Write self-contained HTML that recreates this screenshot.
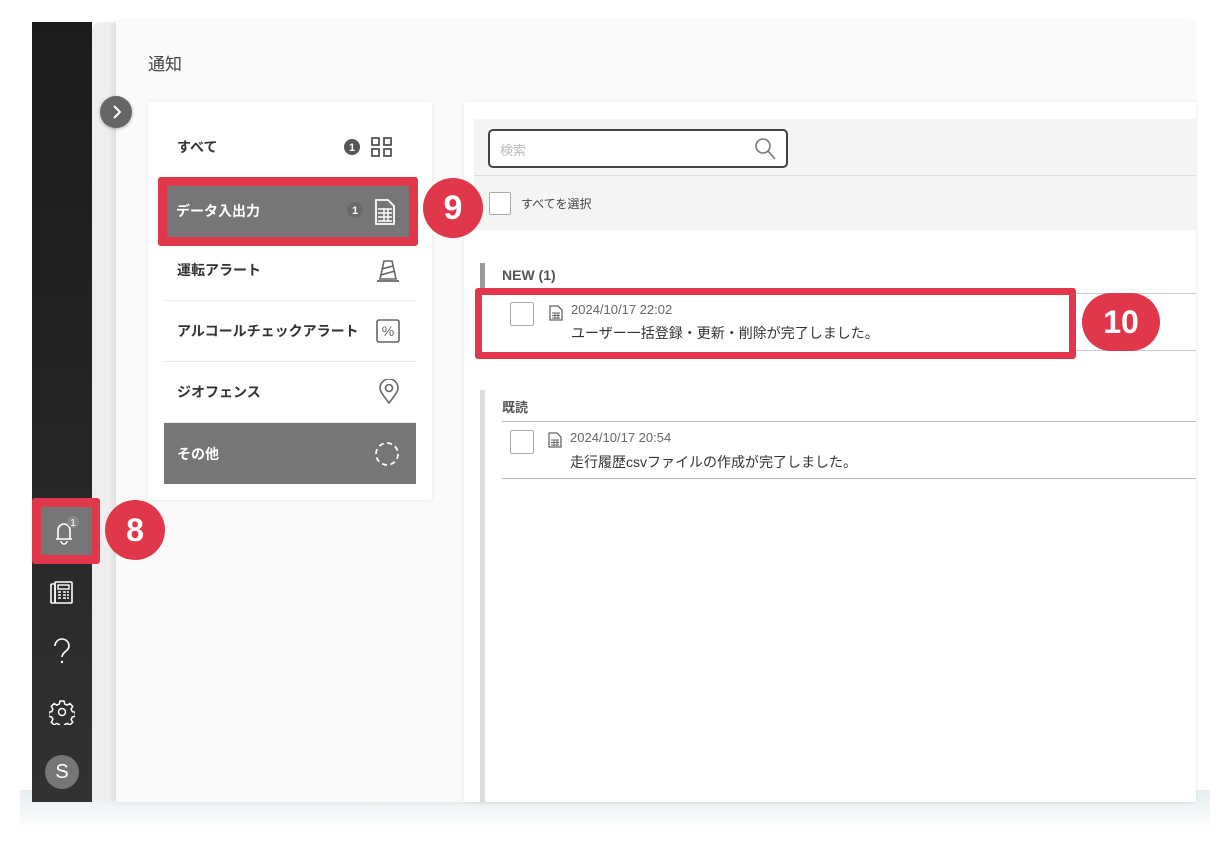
<!DOCTYPE html>
<html><head><meta charset="utf-8"><style>
*{margin:0;padding:0;box-sizing:border-box}
body{width:1228px;height:844px;background:#fff;position:relative;overflow:hidden;font-family:"Liberation Sans","Noto Sans CJK JP",sans-serif;color:#333}
.a{position:absolute}
.item{position:absolute;left:164px;width:252px;height:61px;border-bottom:1px solid #ececec;background:#fff}
.item span{position:absolute;left:13px;top:50%;transform:translateY(-50%);font-size:14px;font-weight:bold;color:#333}
.item svg{position:absolute;right:16px;top:50%;transform:translateY(-50%)}
.circ{position:absolute;border-radius:50%;background:#e0374b;color:#fff;font-weight:bold;text-align:center;font-family:"Liberation Sans",sans-serif}
.cb{position:absolute;border:1.5px solid #aaa;border-radius:2px;background:#fff}
</style></head><body>
<div class="a" style="left:20px;top:790px;width:1190px;height:40px;background:linear-gradient(#e6eef0,#fff)"></div>
<!-- sidebar -->
<div class="a" style="left:32px;top:22px;width:60px;height:780px;background:linear-gradient(#1b1b1b 0%,#222 40%,#323232 100%)"></div>
<!-- main -->
<div class="a" style="left:92px;top:22px;width:1104px;height:780px;background:#eeeeee;border-radius:8px 0 0 8px"></div>
<div class="a" style="left:116px;top:22px;width:1080px;height:780px;background:#fafafa;box-shadow:-3px 0 6px rgba(0,0,0,0.08)"></div>
<div class="a" style="left:148px;top:50px;font-size:17px;color:#444">通知</div>
<div class="a" style="left:100px;top:96px;width:32px;height:32px;border-radius:50%;background:#666;box-shadow:0 1px 3px rgba(0,0,0,.3)"><svg width="32" height="32"><path d="M14 10l6 6-6 6" stroke="#fff" stroke-width="2" fill="none"/></svg></div>
<!-- left card -->
<div class="a" style="left:148px;top:102px;width:284px;height:398px;background:#fff;box-shadow:0 0 4px rgba(0,0,0,.08)"></div>
<div class="item" style="top:117px"><span>すべて</span>
<svg width="60" height="24" viewBox="0 0 60 24"><circle cx="12" cy="12" r="8" fill="#555"/><text x="12" y="16" font-size="11" fill="#fff" text-anchor="middle" font-weight="bold" font-family="Liberation Sans">1</text><g fill="none" stroke="#555" stroke-width="1.8"><rect x="32" y="3" width="7" height="7"/><rect x="44" y="3" width="7" height="7"/><rect x="32" y="14" width="7" height="7"/><rect x="44" y="14" width="7" height="7"/></g></svg></div>
<div class="item" style="top:239px;height:62px"><span>運転アラート</span><svg width="24" height="26"><path d="M8 4h8l4 18H4z M6 12l11-3 M5 18l14-4" fill="none" stroke="#666" stroke-width="1.6"/><path d="M1 24h22" stroke="#666" stroke-width="1.8"/></svg></div>
<div class="item" style="top:301px"><span>アルコールチェックアラート</span><svg width="24" height="24"><rect x="1" y="1" width="22" height="22" rx="2" fill="none" stroke="#666" stroke-width="1.6"/><text x="12" y="17" font-size="14" text-anchor="middle" fill="#666" font-family="Liberation Sans">%</text></svg></div>
<div class="item" style="top:362px"><span>ジオフェンス</span><svg width="22" height="26"><path d="M11 24C4 15 2 12 2 9a9 9 0 0118 0c0 3-2 6-9 15z" fill="none" stroke="#666" stroke-width="1.6"/><circle cx="11" cy="9" r="3.5" fill="none" stroke="#666" stroke-width="1.6"/></svg></div>
<div class="item" style="top:423px;background:#767676;border:none"><span style="color:#fff">その他</span><svg width="26" height="26"><circle cx="13" cy="13" r="11" fill="none" stroke="#fff" stroke-width="1.8" stroke-dasharray="5 3.6"/></svg></div>
<!-- right panel -->
<div class="a" style="left:464px;top:102px;width:732px;height:700px;background:#fff;box-shadow:0 0 4px rgba(0,0,0,.08)"></div>
<div class="a" style="left:474px;top:119px;width:722px;height:111px;background:#f4f4f4"></div>
<div class="a" style="left:474px;top:175px;width:722px;height:1px;background:#ddd"></div>
<div class="a" style="left:488px;top:129px;width:300px;height:39px;border:2px solid #444;border-radius:5px;background:#fff"><span style="position:absolute;left:10px;top:9px;font-size:13px;color:#bbb">検索</span><svg class="a" style="right:8px;top:6px" width="24" height="24"><circle cx="9" cy="9" r="7" fill="none" stroke="#777" stroke-width="1.6"/><path d="M14 14l7 8" stroke="#777" stroke-width="1.6"/></svg></div>
<div class="cb" style="left:489px;top:192px;width:22px;height:23px"></div>
<div class="a" style="left:521px;top:195px;font-size:12px;color:#444">すべてを選択</div>
<!-- highlighted item + 9 -->
<div class="a" style="left:158px;top:177px;width:260px;height:69px;background:#e0374b;border-radius:3px"></div>
<div class="a" style="left:167px;top:186px;width:242px;height:51px;background:#767676"><span style="position:absolute;left:9px;top:15px;font-size:14px;font-weight:bold;color:#fff">データ入出力</span>
<svg class="a" style="right:8px;top:11px" width="60" height="30" viewBox="0 0 60 30"><circle cx="14" cy="13" r="8" fill="#6a6a6a"/><text x="14" y="17" font-size="11" fill="#fff" text-anchor="middle" font-weight="bold" font-family="Liberation Sans">1</text><path d="M35 3h12l6 6v18H35z" fill="none" stroke="#fff" stroke-width="1.8"/><path d="M37 12h14M37 16h14M37 20h14M37 24h14M43 12v12M47 12v12" stroke="#fff" stroke-width="1.5"/></svg></div>
<div class="circ" style="left:423px;top:178px;width:60px;height:60px;font-size:34px;line-height:60px">9</div>
<div class="a" style="left:480px;top:263px;width:5px;height:90px;background:#999"></div>
<div class="a" style="left:502px;top:267px;font-size:14px;font-weight:bold;color:#555">NEW (1)</div>
<div class="a" style="left:502px;top:293px;width:694px;height:1px;background:#ccc"></div>
<div class="a" style="left:502px;top:350px;width:694px;height:1px;background:#ccc"></div>
<div class="a" style="left:475px;top:288px;width:601px;height:71px;border:7px solid #e0374b;border-radius:3px;background:#fff"></div>
<div class="cb" style="left:510px;top:302px;width:24px;height:24px"></div>
<svg class="a" style="left:549px;top:305px" width="14" height="16"><path d="M1 1h8l4 4v10H1z" fill="none" stroke="#666" stroke-width="1.3"/><path d="M3 8h8M3 10.5h8M3 13h8M6 8v6M9 8v6" stroke="#666" stroke-width="1"/></svg>
<div class="a" style="left:571px;top:302px;font-size:13px;color:#666">2024/10/17 22:02</div>
<div class="a" style="left:571px;top:323px;font-size:14px;color:#333">ユーザー一括登録・更新・削除が完了しました。</div>
<div class="circ" style="left:1082px;top:293px;width:78px;height:58px;border-radius:29px;font-size:32px;line-height:58px">10</div>
<div class="a" style="left:480px;top:390px;width:5px;height:412px;background:#ddd"></div>
<div class="a" style="left:502px;top:397px;font-size:13px;font-weight:bold;color:#555">既読</div>
<div class="a" style="left:502px;top:421px;width:694px;height:1px;background:#bbb"></div>
<div class="a" style="left:502px;top:478px;width:694px;height:1px;background:#bbb"></div>
<div class="cb" style="left:510px;top:430px;width:24px;height:24px"></div>
<svg class="a" style="left:548px;top:432px" width="14" height="16"><path d="M1 1h8l4 4v10H1z" fill="none" stroke="#666" stroke-width="1.3"/><path d="M3 8h8M3 10.5h8M3 13h8M6 8v6M9 8v6" stroke="#666" stroke-width="1"/></svg>
<div class="a" style="left:570px;top:430px;font-size:13px;color:#666">2024/10/17 20:54</div>
<div class="a" style="left:570px;top:452px;font-size:14px;color:#333">走行履歴csvファイルの作成が完了しました。</div>
<!-- sidebar icons -->
<div class="a" style="left:32px;top:498px;width:68px;height:66px;background:#e0374b;border-radius:3px"></div>
<div class="a" style="left:41px;top:507px;width:51px;height:48px;background:#767676"><svg width="51" height="48"><path d="M15 32h16M17 32v-9a6 6 0 0112 0v9" fill="none" stroke="#fff" stroke-width="1.6"/><path d="M20 34a3 3 0 006 0" fill="none" stroke="#fff" stroke-width="1.5"/><circle cx="32" cy="15" r="6" fill="#888"/><text x="32" y="19" font-size="10" fill="#fff" text-anchor="middle" font-family="Liberation Sans">1</text></svg></div>
<div class="circ" style="left:105px;top:500px;width:60px;height:60px;font-size:32px;line-height:60px">8</div>
<svg class="a" style="left:49px;top:580px" width="26" height="26"><rect x="2" y="4" width="4" height="19" rx="1" fill="none" stroke="#fff" stroke-width="1.6"/><rect x="6" y="2" width="17" height="21" rx="1" fill="none" stroke="#fff" stroke-width="1.6"/><rect x="9" y="5" width="11" height="4" fill="none" stroke="#fff" stroke-width="1.4"/><path d="M9 12h3M14 12h3M18 12h2M9 15h3M14 15h3M18 15h2M9 18h3M14 18h3M18 18h2" stroke="#fff" stroke-width="1.6"/></svg>
<svg class="a" style="left:50px;top:638px" width="24" height="28"><path d="M5 8a7 7 0 0114 0c0 5-7 6-7 11" fill="none" stroke="#fff" stroke-width="1.6"/><circle cx="12" cy="24" r="1.2" fill="#fff"/></svg>
<svg class="a" style="left:49px;top:699px" width="26" height="26"><g fill="none" stroke="#fff" stroke-width="1.5"><circle cx="13" cy="13" r="3.5"/><path d="M11 2h4l.7 3 2.5 1.2 2.7-1.6 2.8 2.8-1.6 2.7 1.2 2.5 3 .7v4l-3 .7-1.2 2.5 1.6 2.7-2.8 2.8-2.7-1.6-2.5 1.2-.7 3h-4l-.7-3-2.5-1.2-2.7 1.6-2.8-2.8 1.6-2.7-1.2-2.5-3-.7v-4l3-.7 1.2-2.5-1.6-2.7 2.8-2.8 2.7 1.6 2.5-1.2z"/></g></svg>
<div class="a" style="left:45px;top:755px;width:34px;height:34px;border-radius:50%;background:#767676;color:#fff;font-size:20px;text-align:center;line-height:34px">S</div>
</body></html>
